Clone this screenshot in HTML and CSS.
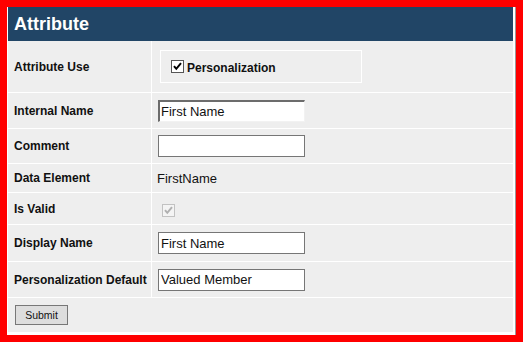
FILE: index.html
```html
<!DOCTYPE html>
<html lang="en">

<head>
    <meta charset="utf-8" />
    <meta name="viewport" content="width=device-width, initial-scale=1.0" />
    <title>Attribute</title>
    <link rel="stylesheet" href="styles.css">
</head>

<body>
    <div class="frame">
        <div class="panel">
            <div class="title">Attribute</div>
            <div class="form">
                <div class="cell label">Attribute Use</div>
                <div class="cell">
                    <div class="use-box">
                        <span class="check">
                            <svg width="13" height="13" viewBox="0 0 13 13">
                                <rect x="0.5" y="0.5" width="12" height="12" fill="#fff" stroke="#555" />
                                <polyline points="3,6.2 5.3,8.8 10,3.2" fill="none" stroke="#000" stroke-width="2" />
                            </svg>
                        </span>
                        <span class="use-label">Personalization</span>
                    </div>
                </div>

                <div class="cell label">Internal Name</div>
                <div class="cell">
                    <input class="field field-focus" type="text" value="First Name">
                </div>

                <div class="cell label">Comment</div>
                <div class="cell">
                    <input class="field" type="text" value="">
                </div>

                <div class="cell label">Data Element</div>
                <div class="cell value">FirstName</div>

                <div class="cell label">Is Valid</div>
                <div class="cell">
                    <span class="check check-off">
                        <svg width="13" height="13" viewBox="0 0 13 13">
                            <rect x="0.5" y="0.5" width="12" height="12" fill="#f4f4f4" stroke="#c2c2c2" />
                            <polyline points="3,6.2 5.3,8.8 10,3.2" fill="none" stroke="#b0b0b0" stroke-width="2" />
                        </svg>
                    </span>
                </div>

                <div class="cell label">Display Name</div>
                <div class="cell">
                    <input class="field" type="text" value="First Name">
                </div>

                <div class="cell label">Personalization Default</div>
                <div class="cell">
                    <input class="field" type="text" value="Valued Member">
                </div>

                <div class="cell actions">
                    <button class="submit" type="button">Submit</button>
                </div>
            </div>
        </div>
    </div>
</body>

</html>
```

FILE: styles.css
```css
* {
    padding: 0;
    margin: 0;
    box-sizing: border-box;
}

body {
    background-color: #ff0000;
    font-family: "Liberation Sans", Arial, sans-serif;
    color: #111;
}

.frame {
    width: 523px;
    height: 342px;
    border: 7px solid #ff0000;
}

.panel {
    height: 100%;
    background-color: #ffffff;
    padding: 0 2px 3px 1px;
    border-right: 1px solid #9a9a9a;
    display: flex;
    flex-direction: column;
}

.title {
    height: 34px;
    background-color: #214566;
    color: #ffffff;
    font-size: 18px;
    font-weight: bold;
    line-height: 34px;
    padding-left: 6px;
}

.form {
    flex: 1;
    display: grid;
    grid-template-columns: 143px 1fr;
    grid-template-rows: 51px 35px 34px 28px 31px 36px 35px 1fr;
    gap: 1px;
    background-color: #ffffff;
}

.cell {
    background-color: #eeeeee;
    display: flex;
    align-items: center;
    padding-left: 6px;
}

.label {
    font-size: 12px;
    font-weight: bold;
    color: #111;
}

.value {
    font-size: 13px;
    padding-left: 5px;
}

.use-box {
    width: 202px;
    height: 33px;
    margin-left: 2px;
    border: 1px solid #ffffff;
    display: flex;
    align-items: center;
    padding-left: 10px;
}

.check {
    width: 13px;
    height: 13px;
    display: block;
}

.check svg {
    display: block;
}

.check-off {
    margin-left: 4px;
    margin-top: 3px;
}

.use-label {
    font-size: 12px;
    font-weight: bold;
    margin-left: 3px;
    margin-top: 2px;
}

.field {
    width: 147px;
    height: 22px;
    border: 1px solid #767676;
    background-color: #ffffff;
    font-family: "Liberation Sans", Arial, sans-serif;
    font-size: 13px;
    color: #111;
    padding: 0 2px;
    outline: none;
}

.field-focus {
    border-top: 2px solid #6c6c6c;
    border-left: 2px solid #6c6c6c;
    border-right: 1px solid #f2f2f2;
    border-bottom: 1px solid #f2f2f2;
    padding-left: 1px;
}

.actions {
    grid-column: 1 / -1;
    align-items: flex-start;
    padding: 7px 0 0 7px;
}

.submit {
    width: 53px;
    height: 20px;
    background-color: #dddddd;
    border: 1px solid #777777;
    font-family: "Liberation Sans", Arial, sans-serif;
    font-size: 10.5px;
    color: #111;
}
```
